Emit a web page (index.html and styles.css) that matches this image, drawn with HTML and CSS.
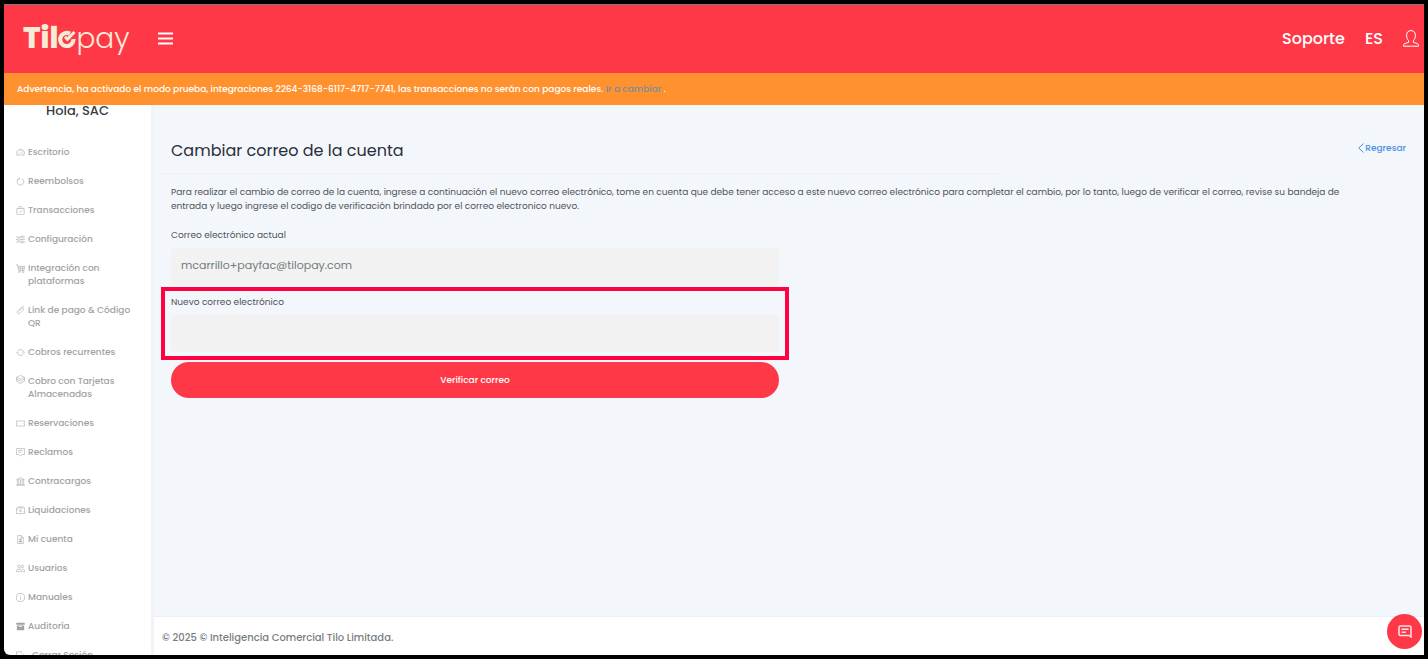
FILE: index.html
```html
<!DOCTYPE html>
<html lang="es">
<head>
<meta charset="utf-8">
<meta name="viewport" content="width=device-width, initial-scale=1">
<title>Tilopay - Cambiar correo de la cuenta</title>
<link rel="stylesheet" href="styles.css">
</head>
<body>
<div class="app">
  <header class="topbar">
    <a class="logo" href="#"><span class="logo-bold">Til</span><svg class="logo-mark" viewBox="0 0 18 18" aria-hidden="true"><path d="M12 3.700A6.600 6.600 0 1 0 15.400 9" fill="none" stroke="currentColor" stroke-width="4.200"/><path d="M7 6.800l2.400 2.600L16.500 2" fill="none" stroke="currentColor" stroke-width="3"/></svg><span class="logo-light">pay</span></a>
    <button class="icon-button menu-toggle" type="button" aria-label="Menú"><svg viewBox="0 0 15 13"><path d="M0 1.500h15M0 6.500h15M0 11.500h15" stroke-width="2"/></svg></button>
    <nav class="topnav">
      <a href="#">Soporte</a>
      <a href="#">ES</a>
      <a class="profile" href="#" aria-label="Perfil"><svg viewBox="0 0 16 17"><path d="M5.700 10.800C4.500 9.600 3.600 7.700 3.600 5.200 3.600 2.300 5.300.6 8 .6s4.400 1.700 4.400 4.600c0 2.500-.9 4.400-2.100 5.600v1.500l3.800 1.200c1 .4 1.400 1 1.400 2.700H.5c0-1.700.4-2.300 1.400-2.700l3.800-1.200z"/></svg></a>
    </nav>
  </header>
  <p class="warning">Advertencia, ha activado el modo prueba, integraciones 2264-3168-6117-4717-7741, las transacciones no serán con pagos reales. <a href="#">Ir a cambiar.</a>.</p>
  <div class="body">
    <aside class="sidebar">
      <p class="hello">Hola, SAC</p>
      <nav class="menu">
        <a href="#"><svg viewBox="0 0 16 16"><path d="M2 13A7 7 0 1 1 14 13Q8 11 2 13zM8 3v2M3 9h2M11 9h2M7.500 9.500L11 6"/></svg><span>Escritorio</span></a>
        <a href="#"><svg viewBox="0 0 16 16"><path d="M10.500 3A6 6 0 1 1 5 3.200M6 .5V4H2.500"/></svg><span>Reembolsos</span></a>
        <a href="#"><svg viewBox="0 0 16 16"><path d="M1.500 4.500h13V14q0 1.500-1.500 1.500H3Q1.500 15.500 1.500 14zM5 4.500V3q0-2.500 3-2.500T11 3v1.500M5.500 9.500l2 2 3.500-3.500"/></svg><span>Transacciones</span></a>
        <a href="#"><svg viewBox="0 0 16 16"><path d="M0 3.500h9M13 3.500h3M0 8h3M7 8h9M0 12.500h9M13 12.500h3"/><circle cx="11" cy="3.500" r="2"/><circle cx="5" cy="8" r="2"/><circle cx="11" cy="12.500" r="2"/></svg><span>Configuración</span></a>
        <a href="#"><svg viewBox="0 0 16 16"><path d="M0 1.500h2.500L5 11.500h9L15.500 4H3M4 7.500h11M7 4l1 7.500M12 4l-1 7.500"/><circle cx="6" cy="14" r="1.500"/><circle cx="13" cy="14" r="1.500"/></svg><span>Integración con plataformas</span></a>
        <a href="#"><svg viewBox="0 0 16 16"><path d="M5 9.500L10 4.500Q12 3 13 4.500T12.500 7.500L7 13Q4 15 2.500 12.500T3.500 8.500L9 3Q12-.5 14.500 2"/></svg><span>Link de pago &amp; Código QR</span></a>
        <a href="#"><svg viewBox="0 0 16 16"><path d="M3 5.500A5.700 5.700 0 0 1 13.500 7M13 10.500A5.700 5.700 0 0 1 2.500 9M11 7l2.500 2L16 7M0 9l2.500-2L5 9"/></svg><span>Cobros recurrentes</span></a>
        <a href="#"><svg class="raised" viewBox="0 0 16 16"><path d="M8 .7l7 3.400-7 3.400-7-3.400zM1 7.500l7 3.400 7-3.400M1 11.200l7 3.700 7-3.700M1 4v7M15 4v7"/></svg><span>Cobro con Tarjetas Almacenadas</span></a>
        <a href="#"><svg viewBox="0 0 16 16"><path d="M.5 3.500h15v3a1.500 1.500 0 0 0 0 3v3H.5v-3a1.500 1.500 0 0 0 0-3z"/></svg><span>Reservaciones</span></a>
        <a href="#"><svg viewBox="0 0 16 16"><path d="M.7 1h14.600v10.500H11l-3 3-3-3H.7zM4 4.500h8M4 7.500h5"/></svg><span>Reclamos</span></a>
        <a href="#"><svg viewBox="0 0 16 16"><path d="M1 5l7-4 7 4zM2.500 6v7M5 6v7M8 6v7M11 6v7M13.500 6v7M1 13.500h14M0 15.500h16"/></svg><span>Contracargos</span></a>
        <a href="#"><svg viewBox="0 0 16 16"><path d="M.7 3.500h14.600v10H.7zM3 1.500h10"/><circle cx="8" cy="8.500" r="1.800"/><path d="M.7 6.500h2M13.300 10.500h2"/></svg><span>Liquidaciones</span></a>
        <a href="#"><svg viewBox="0 0 16 16"><path d="M3 .7h6l4 4v10.600H3zM9 .7V5h4"/><path class="solid" d="M4.500 13q.5-2.500 3.500-2.500t3.500 2.500z"/><circle class="solid" cx="8" cy="8" r="2"/></svg><span>Mi cuenta</span></a>
        <a href="#"><svg viewBox="0 0 16 16"><circle cx="5.500" cy="4.500" r="2.500"/><circle cx="11.500" cy="4.500" r="2.300"/><path d="M.5 13.500q0-4.500 5-4.500t5 4.500zM11 9q4.500 0 4.500 4.500h-3"/></svg><span>Usuarios</span></a>
        <a href="#"><svg viewBox="0 0 16 16"><circle cx="8" cy="8" r="7.300"/><path d="M8 7v5M8 4v1.500"/></svg><span>Manuales</span></a>
        <a href="#"><svg viewBox="0 0 16 16"><path class="solid" d="M.5 1.500h15v3.500H.5z"/><path class="solid" fill-rule="evenodd" d="M1.500 6h13v8.500h-13zM5.500 7.500v1.200h5V7.500z"/></svg><span>Auditoría</span></a>
        <a class="logout" href="#"><svg viewBox="0 0 16 16"><path d="M10 4V1.500H1v13h9V12M5 8h10M12 5l3 3-3 3"/></svg><span>Cerrar Sesión</span></a>
      </nav>
    </aside>
    <div class="page">
      <main class="content">
        <div class="heading">
          <h1>Cambiar correo de la cuenta</h1>
          <a class="back" href="#"><svg viewBox="0 0 6 10"><path d="M5.500.5L.8 5l4.700 4.500"/></svg>Regresar</a>
        </div>
        <p class="intro">Para realizar el cambio de correo de la cuenta, ingrese a continuación el nuevo correo electrónico, tome en cuenta que debe tener acceso a este nuevo correo electrónico para completar el cambio, por lo tanto, luego de verificar el correo, revise su bandeja de entrada y luego ingrese el codigo de verificación brindado por el correo electronico nuevo.</p>
        <form class="form">
          <div class="field">
            <label for="current">Correo electrónico actual</label>
            <input id="current" type="email" value="mcarrillo+payfac@tilopay.com" readonly>
          </div>
          <div class="field highlighted">
            <label for="new">Nuevo correo electrónico</label>
            <input id="new" type="email">
          </div>
          <button class="submit" type="button">Verificar correo</button>
        </form>
      </main>
      <footer class="footer">© 2025 © Inteligencia Comercial Tilo Limitada.</footer>
    </div>
  </div>
  <button class="chat" type="button" aria-label="Chat"><svg viewBox="0 0 14 13"><path d="M2.500 1h9Q13 1 13 2.500V12l-2-1.500H2.500Q1 10.500 1 9V2.500Q1 1 2.500 1zM3.500 4.200h7M3.500 7.200h4.500"/></svg></button>
</div>
</body>
</html>
```

FILE: styles.css
```css
* {
  box-sizing: border-box;
}

body {
  margin: 0;
  padding: 4px;
  height: 100vh;
  background: #000;
  font-family: Poppins, Inter, "Liberation Sans", sans-serif;
  font-size: 9px;
  color: #4f535a;
}

a {
  color: inherit;
  text-decoration: none;
}

p,
h1 {
  margin: 0;
}

svg {
  display: block;
  flex: none;
  fill: none;
  stroke: currentColor;
}

.solid {
  fill: currentColor;
  stroke: none;
}

button {
  border: 0;
  padding: 0;
  font: inherit;
  cursor: pointer;
}

.app {
  position: relative;
  height: 100%;
  display: flex;
  flex-direction: column;
  overflow: hidden;
  background: #fff;
  border-radius: 0 0 0 6px;
}

.topbar {
  flex: none;
  height: 69px;
  display: flex;
  align-items: center;
  padding: 0 5px 2px 19px;
  background: #ff3847;
  border-top: 1px solid #8b7a7c;
  color: #fff;
}

.logo {
  display: flex;
  align-items: baseline;
  color: #f5ecd7;
  line-height: 36px;
}

.logo-bold {
  font-size: 29px;
  font-weight: 800;
}

.logo-mark {
  width: 18px;
  height: 18px;
}

.logo-light {
  font-size: 28px;
  font-weight: 300;
}

.icon-button {
  background: none;
  color: inherit;
}

.menu-toggle {
  margin-left: 29px;
}

.menu-toggle svg {
  width: 15px;
  height: 13px;
}

.topnav {
  margin-left: auto;
  display: flex;
  align-items: center;
  gap: 20px;
  font-size: 16px;
  font-weight: 500;
}

.profile svg {
  width: 16px;
  height: 17px;
}

.warning {
  flex: none;
  padding: 0 13px;
  line-height: 32px;
  background: #ff922e;
  color: #fff;
  font-weight: 500;
}

.warning a {
  color: #7a8f9c;
}

.body {
  flex: 1;
  min-height: 0;
  display: flex;
}

.sidebar {
  flex: none;
  width: 150px;
  overflow: hidden;
  border-right: 3px solid #f1f3f5;
  color: #a2a2a2;
}

.hello {
  line-height: 12px;
  text-align: center;
  font-size: 13px;
  font-weight: 500;
  color: #383b46;
}

.menu {
  display: flex;
  flex-direction: column;
  gap: 16px;
  padding: 29px 16px 0 12px;
  line-height: 13px;
  font-weight: 500;
}

.menu a {
  display: flex;
  gap: 3px;
}

.menu svg {
  width: 9px;
  height: 9px;
  margin-top: 2px;
}

.menu .raised {
  margin-top: 0;
}

.menu .logout {
  gap: 7px;
}

.page {
  flex: 1;
  min-width: 0;
  display: flex;
  flex-direction: column;
}

.content {
  flex: 1;
  padding: 23px 8px;
  background: #f3f7fc;
}

.heading {
  display: flex;
  justify-content: space-between;
}

.heading h1 {
  width: 67%;
  padding: 11px 9px 10px;
  border-bottom: 1px solid #ebeff4;
  line-height: 24px;
  font-size: 16px;
  font-weight: 400;
  color: #2b2e3a;
}

.back {
  display: flex;
  align-items: center;
  gap: 1px;
  height: 20px;
  margin: 10px 10px 0 0;
  font-weight: 500;
  color: #4a90e2;
}

.back svg {
  width: 6px;
  height: 10px;
}

.intro {
  padding: 11px 44px 0 9px;
  line-height: 14px;
}

.form {
  width: 50%;
  padding: 15px 10px 0 9px;
}

.field {
  position: relative;
  margin-bottom: 10px;
}

.field label {
  display: block;
  padding-bottom: 6px;
  line-height: 14px;
}

.field input {
  display: block;
  width: 100%;
  height: 37px;
  padding: 0 10px 2px;
  border: 0;
  border-radius: 3px;
  outline: 0;
  background: #f2f2f2;
  font: inherit;
  font-size: 11px;
  font-weight: 400;
  color: #6f7b80;
}

.highlighted::after {
  content: "";
  position: absolute;
  inset: -8px -10px;
  border: 4px solid #ff0040;
  pointer-events: none;
}

.submit {
  display: block;
  width: 100%;
  height: 36px;
  border-radius: 18px;
  background: #ff3847;
  color: #fff;
  font-weight: 500;
}

.footer {
  flex: none;
  padding: 4px 8px 0;
  border-top: 1px solid #eceff3;
  line-height: 34px;
  font-size: 10px;
  font-weight: 500;
  color: #7a7d81;
}

.chat {
  position: absolute;
  right: 2px;
  bottom: 6px;
  width: 35px;
  height: 35px;
  display: grid;
  place-items: center;
  border-radius: 50%;
  background: #ff3847;
  color: #ffe3e5;
}

.chat svg {
  width: 14px;
  height: 13px;
  stroke-width: 1.5;
}
```
